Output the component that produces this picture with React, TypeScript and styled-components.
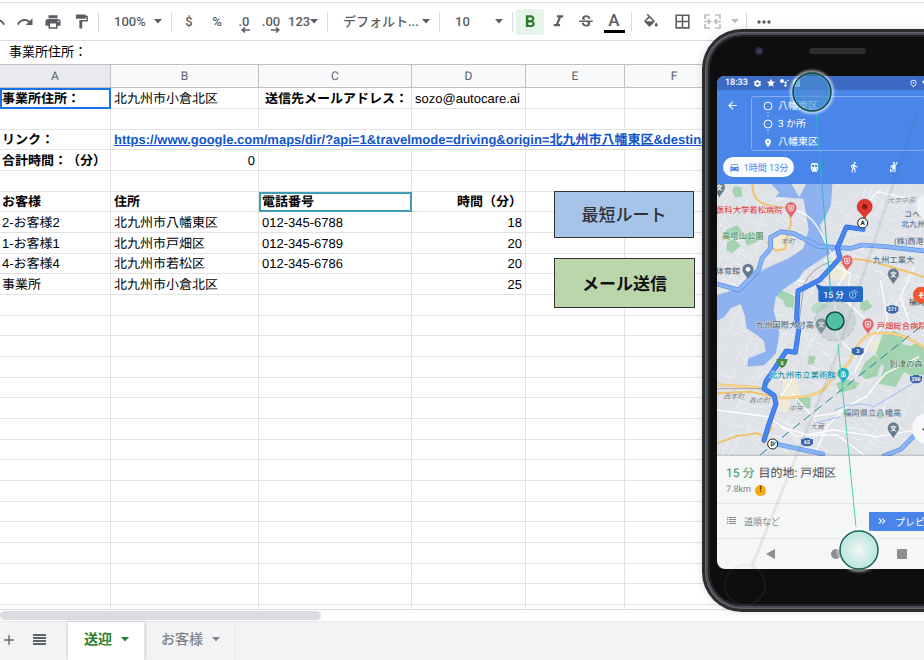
import React from "react";
import styled, { createGlobalStyle } from "styled-components";
import {
  MdAdd,
  MdArrowBack,
  MdBorderAll,
  MdDirectionsCar,
  MdDirectionsWalk,
  MdDirectionsTransit,
  MdFormatBold,
  MdFormatItalic,
  MdFormatPaint,
  MdHail,
  MdKeyboardDoubleArrowRight,
  MdMoreHoriz,
  MdOutlinePlace,
  MdPlace,
  MdPrint,
  MdRedo,
  MdSettings,
  MdSignalWifi4Bar,
  MdStar,
  MdStrikethroughS,
  MdUndo,
} from "react-icons/md";

const GlobalStyle = createGlobalStyle`
  * { box-sizing: border-box; }
  body {
    margin: 0;
    background: #fff;
    font-family: "Liberation Sans", "Noto Sans CJK JP", sans-serif;
    font-size: 13px;
    color: #000;
    text-rendering: geometricPrecision;
    text-spacing-trim: space-all;
  }
  button, select, input { font: inherit; color: inherit; margin: 0; padding: 0; border: 0; background: none; }
`;

const uiFont = `Roboto, "Noto Sans CJK JP", sans-serif`;

const Page = styled.div`
  position: relative;
  display: flex;
  flex-direction: column;
  height: 100vh;
  overflow: hidden;
`;

/* ---------- toolbar ---------- */

const Toolbar = styled.div`
  flex: none;
  display: flex;
  align-items: center;
  height: 39px;
  margin-top: 2px;
  border-top: 1px solid #e0e0e0;
  border-bottom: 1px solid #dadce0;
  font-family: ${uiFont};
  font-weight: 500;
  color: #5a5e63;
  overflow: hidden;
`;

const ToolButton = styled.button<{ $w?: number; $on?: boolean; $faded?: boolean }>`
  flex: none;
  display: flex;
  align-items: center;
  justify-content: center;
  width: ${(p) => p.$w ?? 28}px;
  height: 26px;
  border-radius: 2px;
  background: ${(p) => (p.$on ? "#e6f4ea" : "none")};
  color: ${(p) => (p.$on ? "#2a7d2e" : "inherit")};
  opacity: ${(p) => (p.$faded ? 0.4 : 1)};
  &:first-child { margin-left: -17px; }
`;

const Divider = styled.span`
  flex: none;
  width: 1px;
  height: 20px;
  margin: 0 3px;
  background: #dadce0;
`;

const Picker = styled.label<{ $w: number; $pad?: number }>`
  flex: none;
  display: flex;
  align-items: center;
  width: ${(p) => p.$w}px;
  padding: 0 6px 0 ${(p) => p.$pad ?? 12}px;
  select { flex: 1; min-width: 0; appearance: none; outline: 0; }
  svg { flex: none; }
`;

const TextColor = styled.span`
  width: 21px;
  border-bottom: 3px solid #000;
  font-size: 17px;
  line-height: 20px;
  text-align: center;
`;

const Caret = () => (
  <svg width="8" height="5" viewBox="0 0 8 5" fill="currentColor" aria-hidden="true">
    <path d="M0 0h8L4 4.4z" />
  </svg>
);

const Decimals = styled.span`
  display: flex;
  flex-direction: column;
  align-items: flex-end;
  line-height: 15px;
  padding-top: 4px;
  svg { margin-top: -2px; }
`;

const DecimalArrow = ({ right }: { right?: boolean }) => (
  <svg width="9" height="6" viewBox="0 0 9 6" aria-hidden="true">
    <path
      d={right ? "M0 3h7M5 .5 7.8 3 5 5.500" : "M9 3H2M4 .5 1.200 3 4 5.500"}
      fill="none"
      stroke="currentColor"
      strokeWidth="1.500"
    />
  </svg>
);

const BucketIcon = () => (
  <svg width="18" height="18" viewBox="0 -1 24 24" fill="currentColor" aria-hidden="true">
    <path d="M16.56 8.94 7.62 0 6.21 1.41l2.38 2.38-5.150 5.150c-.59.59-.59 1.540 0 2.120l5.500 5.500c.29.29.68.44 1.060.44s.77-.15 1.060-.44l5.500-5.500c.59-.58.59-1.530 0-2.120zM5.210 10 10 5.210 14.790 10zM19 11.500s-2 2.170-2 3.500c0 1.100.9 2 2 2s2-.9 2-2c0-1.330-2-3.500-2-3.500z" />
  </svg>
);

const MergeIcon = () => (
  <svg width="17" height="15" viewBox="0 0 17 15" fill="none" stroke="currentColor" strokeWidth="1.700" aria-hidden="true">
    <path d="M1 5V1h5M11 1h5v4M1 10v4h5M11 14h5v-4M0 7.500h6M4 5l2.500 2.500L4 10M17 7.500h-6M13 5l-2.500 2.500L13 10" />
  </svg>
);

const FormulaInput = styled.input`
  flex: none;
  display: block;
  width: 100%;
  height: 24px;
  padding: 0 9px 4px;
  border-bottom: 1px solid #c0c0c0;
  outline: 0;
`;

/* ---------- grid ---------- */

const SheetArea = styled.main`
  position: relative;
  flex: 1;
  min-height: 0;
  overflow: hidden;
  border-bottom: 1px solid #dadce0;
`;

const Table = styled.table`
  width: 100%;
  table-layout: fixed;
  border-collapse: separate;
  border-spacing: 0;
  thead th {
    height: 23px;
    padding: 0;
    background: #f8f9fa;
    border-right: 1px solid #c0c0c0;
    border-bottom: 1px solid #c0c0c0;
    font-family: ${uiFont};
    font-size: 12px;
    font-weight: 400;
    color: #5f6368;
  }
  thead th:first-child { background: #e8eaed; }
  tbody tr { height: 21px; }
  tbody tr:nth-child(3n) { height: 20px; }
`;

const Cell = styled.td<{ $bold?: boolean; $right?: boolean; $mark?: string }>`
  height: inherit;
  padding: 1px 3px 0;
  border-right: 1px solid #e2e3e3;
  border-bottom: 1px solid #e2e3e3;
  line-height: 18px;
  white-space: nowrap;
  overflow: hidden;
  font-weight: ${(p) => (p.$bold ? 700 : 400)};
  text-align: ${(p) => (p.$right ? "right" : "left")};
  outline: ${(p) => (p.$mark ? `2px solid ${p.$mark}` : "none")};
  outline-offset: -2px;
  &:first-child { padding-left: 2px; }
`;

const SheetLink = styled.a`
  color: #1155cc;
  font-weight: 700;
`;

const ScriptButtons = styled.div`
  position: absolute;
  left: 554px;
  top: 126px;
  display: flex;
  flex-direction: column;
  gap: 20px;
`;

const ScriptButton = styled.button<{ $fill: string; $strong?: boolean }>`
  width: ${(p) => (p.$strong ? 141 : 140)}px;
  height: ${(p) => (p.$strong ? 50 : 47)}px;
  padding-bottom: 2px;
  border: 1px solid #333;
  background: ${(p) => p.$fill};
  font-size: 17px;
  font-weight: ${(p) => (p.$strong ? 700 : 500)};
  color: ${(p) => (p.$strong ? "#111" : "#2c3138")};
`;

type CellData = { text?: string; bold?: boolean; right?: boolean; mark?: string; link?: boolean };

const b = (text: string, extra: CellData = {}): CellData => ({ text, bold: true, ...extra });
const t = (text: string): CellData => ({ text });
const n = (text: string): CellData => ({ text, right: true });

const columns = [
  { name: "A", width: 111 },
  { name: "B", width: 148 },
  { name: "C", width: 153 },
  { name: "D", width: 114 },
  { name: "E", width: 99 },
  { name: "F", width: 99 },
  { name: "G", width: 0 },
];

const url =
  "https://www.google.com/maps/dir/?api=1&travelmode=driving&origin=北九州市八幡東区&destination=北九州市小倉北区";

const rows: CellData[][] = [
  [b("事業所住所：", { mark: "#1a73e8" }), t("北九州市小倉北区"), b("送信先メールアドレス：", { right: true }), t("sozo@autocare.ai")],
  [],
  [b("リンク："), { text: url, link: true }],
  [b("合計時間：（分）"), n("0")],
  [],
  [b("お客様"), b("住所"), b("電話番号", { mark: "#3fa0b5" }), b("時間（分）", { right: true })],
  [t("2-お客様2"), t("北九州市八幡東区"), t("012-345-6788"), n("18")],
  [t("1-お客様1"), t("北九州市戸畑区"), t("012-345-6789"), n("20")],
  [t("4-お客様4"), t("北九州市若松区"), t("012-345-6786"), n("20")],
  [t("事業所"), t("北九州市小倉北区"), {}, n("25")],
  ...Array.from({ length: 16 }, () => [] as CellData[]),
];

const SheetRow = ({ cells }: { cells: CellData[] }) => {
  if (cells[1]?.link) {
    return (
      <tr>
        <Cell $bold>{cells[0].text}</Cell>
        <Cell colSpan={6}>
          <SheetLink href={cells[1].text}>{cells[1].text}</SheetLink>
        </Cell>
      </tr>
    );
  }
  return (
    <tr>
      {columns.map((c, i) => {
        const d = cells[i] ?? {};
        return (
          <Cell key={c.name} $bold={d.bold} $right={d.right} $mark={d.mark}>
            {d.text}
          </Cell>
        );
      })}
    </tr>
  );
};

/* ---------- bottom bar ---------- */

const ScrollTrack = styled.div`
  flex: none;
  height: 11px;
  padding: 1px 0;
  &::before {
    content: "";
    display: block;
    width: 321px;
    height: 9px;
    border-radius: 5px;
    background: #dadce0;
  }
`;

const TabBar = styled.nav`
  flex: none;
  display: flex;
  height: 39px;
  background: #f1f3f4;
  border-top: 1px solid #e6e8ea;
  color: #5f6368;
`;

const TabTool = styled.button<{ $w: number }>`
  width: ${(p) => p.$w}px;
  padding-bottom: 3px;
  display: flex;
  align-items: center;
  justify-content: center;
`;

const Tabs = styled.div`
  display: flex;
  margin-left: 7px;
`;

const SheetTab = styled.button<{ $active?: boolean }>`
  display: flex;
  align-items: center;
  gap: 9px;
  padding: 0 15px 6px 16px;
  border-right: 1px solid #e4e6e8;
  background: ${(p) => (p.$active ? "#fff" : "transparent")};
  box-shadow: ${(p) => (p.$active ? "0 0 3px rgba(60, 64, 67, 0.3)" : "none")};
  color: ${(p) => (p.$active ? "#2a7d2e" : "#80868b")};
  font-size: 14px;
  font-weight: ${(p) => (p.$active ? 700 : 500)};
  svg { margin-top: 3px; }
`;

const AllSheetsIcon = () => (
  <svg width="13" height="12" viewBox="0 0 13 12" fill="currentColor" aria-hidden="true">
    <path d="M0 0h13v2H0zM0 3h13v2H0zM0 6h13v2H0zM0 9h13v2H0z" />
  </svg>
);

/* ---------- phone ---------- */

const Phone = styled.section`
  position: absolute;
  left: 702px;
  top: 29px;
  width: 272px;
  height: 583px;
  padding: 3px;
  border-radius: 40px;
  background: #2b2c2e;
  box-shadow: 0 0 8px rgba(0, 0, 0, 0.12);
  font-family: ${uiFont};
  overflow: hidden;
`;

const PhoneBody = styled.div`
  height: 100%;
  padding: 44px 12px 0;
  border-radius: 37px;
  background: #0e0e0f;
  box-shadow: inset 0 0 0 1px #63656b, inset 0 0 0 3px #4c4e55, inset 0 0 0 5px #202124;
`;

const Screen = styled.div`
  display: flex;
  flex-direction: column;
  height: 493px;
  border-radius: 8px;
  background: #f5f6f6;
  overflow: hidden;
`;

const StatusBar = styled.div`
  flex: none;
  display: flex;
  align-items: center;
  justify-content: space-between;
  height: 14px;
  padding: 0 28px 0 8px;
  background: #3d6bc4;
  color: #fff;
  font-size: 9px;
  font-weight: 500;
`;

const StatusGroup = styled.div`
  display: flex;
  align-items: center;
  gap: 4px;
  time { margin-right: 1px; }
`;

const RoutePanel = styled.header`
  flex: none;
  height: 94px;
  padding: 6px 6px 0;
  background: #4a86ea;
  color: #fff;
`;

const RouteTop = styled.div`
  display: flex;
  align-items: flex-start;
  gap: 12px;
  padding-left: 3px;
`;

const BackButton = styled.button`
  display: flex;
  padding-top: 3px;
`;

const Stops = styled.ol`
  flex: none;
  width: 174px;
  height: 55px;
  margin: 0;
  padding: 1px 0 0 11px;
  border: 1px solid #83adf4;
  border-radius: 3px;
  list-style: none;
  font-size: 10px;
  line-height: 14px;
  li { display: flex; align-items: center; gap: 5px; height: 18px; }
`;

const Modes = styled.div`
  display: flex;
  align-items: center;
  margin-top: 6px;
`;

const Mode = styled.button<{ $on?: boolean }>`
  display: flex;
  align-items: center;
  justify-content: center;
  gap: 4px;
  width: ${(p) => (p.$on ? 71 : 40)}px;
  height: 20px;
  border-radius: 10px;
  background: ${(p) => (p.$on ? "#fafbfd" : "none")};
  color: ${(p) => (p.$on ? "#4a86ea" : "#fff")};
  font-size: 9px;
`;

const MapBox = styled.svg`
  flex: none;
  display: block;
  width: 241px;
  height: 272px;
  font-family: ${uiFont};
`;

const Info = styled.div`
  flex: none;
  height: 48px;
  padding: 8px 9px 0;
  border-bottom: 1px solid #e3e4e5;
  box-shadow: 0 -1px 2px rgba(0, 0, 0, 0.2);
  font-size: 12px;
  line-height: 18px;
  color: #4a4d50;
  em { font-style: normal; color: #3b9561; margin-right: 1px; }
`;

const Distance = styled.div`
  display: flex;
  align-items: center;
  gap: 4px;
  height: 16px;
  font-size: 9px;
  color: #7c7f82;
`;

const Warning = styled.span`
  width: 11px;
  height: 11px;
  border-radius: 50%;
  background: #f9ab12;
  color: #3c3000;
  font-weight: 700;
  line-height: 11px;
  text-align: center;
`;

const Actions = styled.div`
  flex: none;
  display: flex;
  align-items: center;
  height: 35px;
  padding-left: 10px;
  border-bottom: 1px solid #e3e4e5;
  font-size: 9px;
  color: #85888b;
`;

const StepsButton = styled.button`
  display: flex;
  align-items: center;
  gap: 8px;
  width: 142px;
`;

const StepsIcon = () => (
  <svg width="9" height="8" viewBox="0 0 9 8" fill="currentColor" aria-hidden="true">
    <path d="M0 0h1v1H0zM2 0h7v1H2zM0 2h1v1H0zM2 2h7v1H2zM0 4h1v1H0zM2 4h7v1H2zM0 6h1v1H0zM2 6h7v1H2z" />
  </svg>
);

const PreviewButton = styled.button`
  flex: 1;
  display: flex;
  align-items: center;
  gap: 7px;
  height: 19px;
  padding-left: 7px;
  background: #4a86ea;
  color: #fff;
  font-size: 10px;
  white-space: nowrap;
`;

const NavKeys = styled.div`
  flex: 1;
  display: flex;
  align-items: center;
  justify-content: center;
  gap: 56px;
  padding-right: 3px;
`;

const Touches = styled.svg`
  position: absolute;
  left: 0;
  top: 0;
  width: 272px;
  height: 583px;
  pointer-events: none;
`;

/* Minor streets: short jittered polylines laid out from a fixed seed. */
const minorStreets = (() => {
  let seed = 17;
  const rnd = () => {
    seed = (seed * 1103515245 + 12345) % 2147483648;
    return seed / 2147483648;
  };
  let d = "";
  for (let i = 0; i < 480; i++) {
    const x = Math.round(rnd() * 720);
    const y = Math.round(rnd() * 816 + 12);
    const a = rnd() > 0.5 ? 0.35 : 1.9;
    const len = 15 + rnd() * 45;
    const dx = Math.round(Math.cos(a + rnd() * 0.5) * len);
    const dy = Math.round(Math.sin(a + rnd() * 0.5) * len);
    d += `M${x} ${y}l${dx} ${dy}l${Math.round(dx * 0.6 + rnd() * 16)} ${Math.round(dy * 0.6 - rnd() * 16)}`;
  }
  return d;
})();

const placeNames: [number, number, string, string, number, boolean?][] = [
  [6, 100, "医科大学若松病院", "#d8464f", 25],
  [24, 178, "高塔山公園", "#4a9160", 25],
  [200, 193, "本町", "#777b80", 21, true],
  [6, 283, "体育館", "#5b7083", 24],
  [520, 68, "大字中原", "#85898e", 21, true],
  [570, 112, "コベルコ", "#5b7083", 24],
  [562, 142, "北九州", "#5b7083", 24],
  [540, 193, "(株)西港", "#5b7083", 24],
  [476, 249, "九州工業大", "#5b7083", 25],
  [584, 376, "福岡", "#55585c", 24],
  [125, 445, "九州国際大付高", "#5b7083", 25],
  [488, 446, "戸畑総合病院", "#d8464f", 25],
  [526, 561, "到津の森公園", "#4a8568", 25],
  [165, 594, "北九州市立美術館", "#2292a8", 25],
  [28, 658, "西本町", "#777b80", 21, true],
  [105, 670, "春の町", "#777b80", 21, true],
  [225, 692, "中央", "#777b80", 21, true],
  [288, 747, "大蔵", "#777b80", 21, true],
  [387, 709, "福岡県立八幡高", "#62768a", 25],
];

const Pin = ({ x, y, color, mark }: { x: number; y: number; color: string; mark?: string }) => (
  <g transform={`translate(${x} ${y})`}>
    <path d="M0 30C-3 18-17 12-17-2a17 17 0 0 1 34 0C17 12 3 18 0 30z" fill={color} stroke="#fff" strokeOpacity=".5" />
    {mark === "H" && (
      <g fill="none" stroke="#fff" strokeWidth="2.500">
        <path d="M-8-9H8V0a8 8 0 0 1-16 0z" />
        <path d="M0-6V4M-5-1H5" />
      </g>
    )}
    {mark === "M" && <path d="M-8-4 0-9l8 5zM-7-2h3v8h-3zM-2-2h4v8h-4zM4-2h3v8H4zM-8 6H8v2H-8z" fill="#fff" />}
    {mark === "o" && <circle r="7" cy="-2" fill="#fff" />}
    {mark === "文" && (
      <text y="6" textAnchor="middle" fontSize="20" fontWeight="700" fill="#fff">
        文
      </text>
    )}
  </g>
);

const Shield = ({ x, y, label, green }: { x: number; y: number; label: string; green?: boolean }) => (
  <g transform={`translate(${x} ${y})`}>
    <path
      d={green ? "M-17-12H17Q14 10 0 15Q-14 10-17-12z" : "M-18-9Q-9-7-7-12H7Q9-7 18-9V5Q12 13 0 13T-18 5z"}
      fill={green ? "#4d8b3a" : "#3b66ad"}
    />
    <text y="6" textAnchor="middle" fontSize="16" fontWeight="700" fill="#fff">
      {label}
    </text>
  </g>
);

const routeLine =
  "M447 148l-50-7-27 63 8 30-60 65-66 34-4 80 6 38-10 66-27-4-62 93-5 20 30 20 6 25-24 70-12 40";
const highwayLine =
  "M9 312l65 18 60-60 10-35 26-30V172l30-17 40 6 75 38 95 6 34-10 70 5 130 14 110-22M176 790l150 32M510 828l50-20 40-40 60-20";

const CityMap = () => (
  <MapBox viewBox="9 12 723 816" role="img" aria-label="ルート地図">
    <rect x="9" y="12" width="723" height="816" fill="#dfe2e7" />
    <path d={minorStreets} fill="none" stroke="#f1f3f6" strokeWidth="2" />
    <g fill="#eeead8">
      <path d="M170 170l45-15 20 30-25 30-40-5zM350 235l60 15-15 50-50-5zM205 605l40-10 15 50-50 20zM470 480l50 5-10 35-40-5zM190 650l40 10-10 40-25-10z" />
    </g>
    <g fill="#a3d3b0">
      <path d="M60 18l22 4 3 28-22 2-8-18zM35 150l35-15 20 30-25 10-28-5zM40 185l20-8 20 20-25 22-18-10zM85 165l30-10 15 30-30 12z" />
      <path d="M182 322l35 15 25 12-5 35-22-4-8-20-25-15zM385 330l30-5 10 15-25 10zM440 365l20-5 15 20-25 15-12-10z" />
      <path d="M505 465l35-12 30 15-5 25 25 5 20-12 30 35v60l-40 10-30-15-25 45-50-10 15-50-25-40zM455 545l25-20 30 18-15 25-5 20-35 10-20-15z" />
      <path d="M367 610l30-12 38 10-10 18-48 12zM250 652h40l-2 34-38-8zM285 525l20 5-5 22-20 2zM490 690l20 10-10 18-15-8z" />
      <path d="M290 385l20-20 35 10-5 10-40 15z" opacity=".6" />
    </g>
    <g fill="#8eb1ef">
      <path d="M172 12H355L351 75 335 110 318 135 330 180 360 212 318 240 270 272 252 298 205 330 185 352 178 400 196 460 186 520 150 556 100 560 103 535 155 515 150 480 98 445 92 405 80 372 50 385 30 412 9 422V345L75 325 150 268 225 235 268 205 284 150 276 100 268 56 185 50 196 38z" />
      <path d="M96 395l50-25 34 25 16 65-30 40-50-50z" />
    </g>
    <path d="M232 12l24 40 20-40z" fill="#dfe2e7" />
    <g fill="none" stroke="#fff" strokeWidth="4" strokeLinejoin="round">
      <path
        d="M240 90q60 10 95 100l35 60M240 590l-40 60M330 240l80 40-15 80 60 60M460 70l30-35 90 20M420 230l-60 110 10 130 60 60M250 300l110 30M9 690l150 20 90 60 110-20 130 20 240-40M300 828l40-90 60-60 60-30M500 300l20 120-50 60-50 100M600 260l-40 90 30 90"
        strokeOpacity=".9"
      />
      <path d="M235 640l60 70 70-10 90-50 60-70 100-50M200 740l80 25 90 0 80 60" />
    </g>
    <path d="M360 690q80-30 120-10l150-90M300 730l80-20" fill="none" stroke="#9dbdf5" strokeWidth="3" />
    <g fill="none" strokeLinejoin="round" strokeLinecap="round">
      <g stroke="#f0c26a" strokeWidth="6">
        <path d="M115 12q0 48 35 60t75 10l6 50-10 35-8 40-28 5-25-25M400 236q40 0 80 10l120 35 130 50" />
        <path d="M9 614l120 8 70 32q60 0 95-10 40-10 50-35 40-40 60-60l20-40q25-50 70-50 70-4 130 40l60 50" strokeWidth="8" />
        <path d="M9 640l100-5 90 20M9 790l60-22 60-8 25 12 20-28" />
      </g>
      <path d="M9 614l120 8 70 32q60 0 95-10 40-10 50-35 40-40 60-60l20-40q25-50 70-50 70-4 130 40" stroke="#f9e2ad" strokeWidth="3" />
      <path d="M9 626h140l50-60M350 245q-60 20-80 70l-20 150" stroke="#a3a7ad" strokeWidth="3" />
      <path d={highwayLine} stroke="#5d8fe0" strokeWidth="14" />
      <path d={highwayLine} stroke="#88b5f7" strokeWidth="10" />
      <path d={routeLine} stroke="#2f6bd6" strokeWidth="15" />
      <path d={routeLine} stroke="#4787f4" strokeWidth="11" />
    </g>
    <Pin x={231} y={85} color="#e0636b" mark="H" />
    <Pin x={399} y={244} color="#e0636b" mark="H" />
    <Pin x={462} y={434} color="#e0636b" mark="H" />
    <Pin x={102} y={270} color="#637b8d" mark="o" />
    <Pin x={538} y={284} color="#637b8d" mark="文" />
    <Pin x={538} y={746} color="#637b8d" mark="文" />
    <Pin x={322} y={434} color="#637b8d" mark="文" />
    <Pin x={16} y={24} color="#637b8d" mark="文" />
    <Pin x={388} y={582} color="#25afc0" mark="M" />
    <Shield x={535} y={388} label="271" />
    <Shield x={606} y={597} label="296" />
    <Shield x={431} y={513} label="3" />
    <Shield x={279} y={786} label="62" />
    <Shield x={204} y={549} label="5" green />
    {placeNames.map(([x, y, name, color, size, slanted]) => (
      <text
        key={name}
        x={x}
        y={y}
        fill={color}
        fontSize={size}
        fontStyle={slanted ? "italic" : "normal"}
        fontWeight={slanted ? 400 : 500}
        stroke="#eef0f3"
        strokeWidth="2"
        paintOrder="stroke"
      >
        {name}
      </text>
    ))}
    <path d="M304 311l22 8h115q6 0 6 6v35q0 6-6 6H319q-6 0-6-6v-28z" fill="#2468c9" />
    <text x="328" y="353" fontSize="26" fontWeight="500" fill="#fff">
      15 分
    </text>
    <g fill="none" stroke="#bcd4f7" strokeWidth="2.500">
      <circle cx="416" cy="345" r="10" />
      <path d="M416 339v11M419 332q10-4 11 8" />
    </g>
    <path d="M452 122C448 98 429 99 429 80a23 23 0 0 1 46 0c0 19-19 18-23 42z" fill="#e0392d" stroke="#b3261e" />
    <circle cx="452" cy="80" r="8" fill="#8e1a14" />
    {[
      { name: "A", x: 446, y: 129 },
      { name: "D", x: 176, y: 792 },
    ].map(({ name, x, y }) => (
      <g key={name} transform={`translate(${x} ${y})`}>
        <circle r="15" fill="#fff" stroke="#1b1b1b" strokeWidth="3" />
        <text y="7" textAnchor="middle" fontSize="19" fontWeight="700" fill="#111">
          {name}
        </text>
      </g>
    ))}
    <circle cx="622" cy="345" r="25" fill="#f0592b" />
    <text x="622" y="353" textAnchor="middle" fontSize="21" fontWeight="700" fill="#fff">
      そ
    </text>
    <circle cx="650" cy="80" r="42" fill="#f1f2f4" />
    <circle cx="643" cy="746" r="48" fill="#f7f8f9" />
    <path d="M624 748l12-8v16z" fill="#444" />
  </MapBox>
);

const TouchOverlay = () => (
  <Touches viewBox="702 29 272 583" aria-hidden="true">
    <defs>
      <radialGradient id="touchBlue">
        <stop offset="0" stopColor="#5a8fd8" stopOpacity=".7" />
        <stop offset="1" stopColor="#3f93cf" stopOpacity=".8" />
      </radialGradient>
      <radialGradient id="touchMint">
        <stop offset="0" stopColor="#f2f6f5" />
        <stop offset="1" stopColor="#b9e5dd" />
      </radialGradient>
      <filter id="glow" x="-30%" y="-30%" width="160%" height="160%">
        <feGaussianBlur stdDeviation="1.500" />
      </filter>
    </defs>
    <circle cx="759" cy="51" r="4" fill="#2a2b3c" />
    <circle cx="759" cy="51" r="2" fill="#384069" />
    <rect x="809" y="48" width="57" height="6" rx="3" fill="#2c2d2e" />
    <path d="M916 115 835 360 752 566" stroke="#555" strokeOpacity=".1" strokeWidth="3" fill="none" />
    <circle cx="745" cy="585" r="20" fill="none" stroke="#888" strokeOpacity=".1" strokeWidth="2" />
    <path d="M760 455 924 324" stroke="#25839a" strokeWidth="1" strokeDasharray="9 5" />
    <path d="M816 113 831 296" stroke="#2db8b5" strokeWidth="1" />
    <path d="M838 344 856 527" stroke="#4fcbb5" strokeWidth="1" />
    <circle cx="835" cy="321" r="20" fill="#aab9bb" fillOpacity=".35" stroke="#9fc7bd" strokeDasharray="4 3" />
    <circle cx="835" cy="321" r="9" fill="#50bfa5" stroke="#0e4a43" strokeWidth="1.500" />
    <circle cx="812" cy="92" r="20" fill="none" stroke="#fff" strokeOpacity=".8" strokeWidth="3" filter="url(#glow)" />
    <circle cx="812" cy="92" r="19" fill="url(#touchBlue)" stroke="#0b4a4a" strokeWidth="1.500" fillOpacity=".8" />
    <circle cx="859" cy="550" r="20" fill="none" stroke="#fff" strokeOpacity=".7" strokeWidth="3" filter="url(#glow)" />
    <circle cx="859" cy="550" r="19" fill="url(#touchMint)" stroke="#17645a" strokeWidth="1.500" />
  </Touches>
);

const StopDot = () => (
  <svg width="10" height="18" viewBox="0 0 10 18" fill="none" stroke="#fff" aria-hidden="true">
    <circle cx="5" cy="8" r="4" />
    <path d="M5 14v4" strokeDasharray="1 2" />
  </svg>
);

const PhoneView = () => (
  <Phone aria-label="スマートフォン">
    <PhoneBody>
      <Screen>
        <StatusBar>
          <StatusGroup>
            <time>18:33</time>
            <MdSettings size={9} />
            <MdStar size={10} />
            <svg width="9" height="8" viewBox="0 0 9 8" fill="#fff">
              <circle cx="2" cy="2" r="2" />
              <circle cx="5.500" cy="3.500" r="1.200" />
              <circle cx="8" cy="1.500" r=".8" />
              <circle cx="5.500" cy="6.500" r="1.300" />
            </svg>
            <svg width="7" height="8" viewBox="0 0 7 8" fill="#cfeee0">
              <path d="M2 0h5v8H0V2z" />
            </svg>
          </StatusGroup>
          <StatusGroup>
            <MdOutlinePlace size={9} />
            <MdSignalWifi4Bar size={9} />
          </StatusGroup>
        </StatusBar>
        <RoutePanel>
          <RouteTop>
            <BackButton aria-label="戻る">
              <MdArrowBack size={13} />
            </BackButton>
            <Stops>
              <li>
                <StopDot />
                八幡東区
              </li>
              <li>
                <StopDot />
                3 か所
              </li>
              <li>
                <MdPlace size={10} />
                八幡東区
              </li>
            </Stops>
          </RouteTop>
          <Modes>
            <Mode $on>
              <MdDirectionsCar size={11} />
              1時間 13分
            </Mode>
            <Mode aria-label="電車">
              <MdDirectionsTransit size={11} />
            </Mode>
            <Mode aria-label="徒歩">
              <MdDirectionsWalk size={12} />
            </Mode>
            <Mode aria-label="配車">
              <MdHail size={12} />
            </Mode>
          </Modes>
        </RoutePanel>
        <CityMap />
        <Info>
          <em>15 分</em> 目的地: 戸畑区
          <Distance>
            7.8km <Warning>!</Warning>
          </Distance>
        </Info>
        <Actions>
          <StepsButton>
            <StepsIcon />
            道順など
          </StepsButton>
          <PreviewButton>
            <MdKeyboardDoubleArrowRight size={12} />
            プレビュー
          </PreviewButton>
        </Actions>
        <NavKeys>
          <svg width="9" height="10" viewBox="0 0 9 10" fill="#8d8e8f">
            <path d="M9 0v10L0 5z" />
          </svg>
          <svg width="10" height="10" viewBox="0 0 10 10" fill="#8d8e8f">
            <circle cx="5" cy="5" r="5" />
          </svg>
          <svg width="10" height="10" viewBox="0 0 10 10" fill="#8d8e8f">
            <rect width="10" height="10" rx="1" />
          </svg>
        </NavKeys>
      </Screen>
    </PhoneBody>
    <TouchOverlay />
  </Phone>
);

export default function App() {
  return (
    <Page>
      <GlobalStyle />
      <Toolbar role="toolbar">
        <ToolButton aria-label="元に戻す"><MdUndo size={18} /></ToolButton>
        <ToolButton aria-label="やり直し"><MdRedo size={18} /></ToolButton>
        <ToolButton aria-label="印刷"><MdPrint size={18} /></ToolButton>
        <ToolButton aria-label="書式を貼り付け"><MdFormatPaint size={17} /></ToolButton>
        <Divider />
        <Picker $w={66}>
          <select aria-label="ズーム"><option>100%</option></select>
          <Caret />
        </Picker>
        <Divider />
        <ToolButton>$</ToolButton>
        <ToolButton>%</ToolButton>
        <ToolButton $w={26}>
          <Decimals>.0<DecimalArrow /></Decimals>
        </ToolButton>
        <ToolButton>
          <Decimals>.00<DecimalArrow right /></Decimals>
        </ToolButton>
        <Picker $w={39} $pad={3}>
          <select aria-label="表示形式"><option>123</option></select>
          <Caret />
        </Picker>
        <Divider />
        <Picker $w={105}>
          <select aria-label="フォント"><option>デフォルト...</option></select>
          <Caret />
        </Picker>
        <Divider />
        <Picker $w={66}>
          <select aria-label="フォントサイズ"><option>10</option></select>
          <Caret />
        </Picker>
        <Divider />
        <ToolButton $on aria-label="太字"><MdFormatBold size={20} /></ToolButton>
        <ToolButton aria-label="斜体"><MdFormatItalic size={19} /></ToolButton>
        <ToolButton aria-label="取り消し線"><MdStrikethroughS size={18} /></ToolButton>
        <ToolButton aria-label="テキストの色"><TextColor>A</TextColor></ToolButton>
        <Divider />
        <ToolButton $w={32} aria-label="塗りつぶしの色"><BucketIcon /></ToolButton>
        <ToolButton $w={30} aria-label="枠線"><MdBorderAll size={19} /></ToolButton>
        <ToolButton $w={30} $faded aria-label="セルを結合"><MergeIcon /></ToolButton>
        <ToolButton $w={16} $faded aria-label="結合の種類"><Caret /></ToolButton>
        <Divider />
        <ToolButton aria-label="その他"><MdMoreHoriz size={20} /></ToolButton>
      </Toolbar>
      <FormulaInput aria-label="数式" defaultValue="事業所住所：" />
      <SheetArea>
        <Table>
          <colgroup>
            {columns.map((c) => (
              <col key={c.name} width={c.width || undefined} />
            ))}
          </colgroup>
          <thead>
            <tr>
              {columns.map((c) => (
                <th key={c.name} scope="col">{c.name}</th>
              ))}
            </tr>
          </thead>
          <tbody>
            {rows.map((cells, i) => (
              <SheetRow key={i} cells={cells} />
            ))}
          </tbody>
        </Table>
        <ScriptButtons>
          <ScriptButton $fill="#a6c4e8">最短ルート</ScriptButton>
          <ScriptButton $fill="#bcd6ac" $strong>メール送信</ScriptButton>
        </ScriptButtons>
      </SheetArea>
      <ScrollTrack />
      <TabBar>
        <TabTool $w={18} aria-label="シートを追加"><MdAdd size={16} /></TabTool>
        <TabTool $w={43} aria-label="すべてのシート">
          <AllSheetsIcon />
        </TabTool>
        <Tabs>
          <SheetTab $active>送迎<Caret /></SheetTab>
          <SheetTab>お客様<Caret /></SheetTab>
        </Tabs>
      </TabBar>
      <PhoneView />
    </Page>
  );
}
